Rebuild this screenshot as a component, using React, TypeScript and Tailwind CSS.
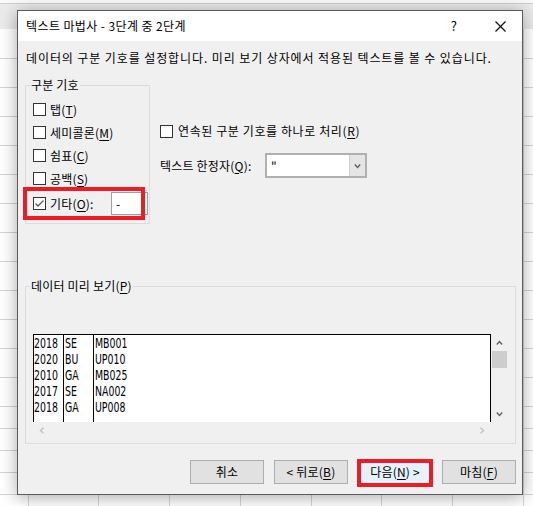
import React from "react";

const rowHeights = [
  "h-[30px]", "h-[29px]", "h-[29px]", "h-[29px]", "h-[29px]", "h-[29px]", "h-[29px]",
  "h-[29px]", "h-[29px]", "h-[29px]", "h-[29px]", "h-[29px]", "h-[29px]",
  "h-[22px]", "h-[22px]", "h-[22px]", "h-[22px]", "h-[22px]",
];
const colWidths = [
  "w-[29px]", "w-[70px]", "w-[71px]", "w-[71px]", "w-[71px]", "w-[70px]", "w-[71px]", "w-[71px]", "w-[71px]",
];

const preview = [
  ["2018", "SE", "MB001"],
  ["2020", "BU", "UP010"],
  ["2010", "GA", "MB025"],
  ["2017", "SE", "NA002"],
  ["2018", "GA", "UP008"],
];

function Mn({ children }: { children: React.ReactNode }) {
  return <u className="underline underline-offset-[2px] decoration-[1px]">{children}</u>;
}

function Box({ checked }: { checked?: boolean }) {
  return (
    <span className="w-[13px] h-[13px] border border-[#333333] bg-white flex items-center justify-center shrink-0">
      {checked && (
        <svg width="11" height="11" viewBox="0 0 11 11">
          <path d="M1.5 5.5 L4 8 L9.5 2.5" stroke="#5a5a5a" strokeWidth="1.3" fill="none" />
        </svg>
      )}
    </span>
  );
}

function Chevron({ dir, color }: { dir: "up" | "down" | "left" | "right"; color: string }) {
  const d = {
    up: "M0.8 4.5 L3.5 1.5 L6.2 4.5",
    down: "M0.8 1.5 L3.5 4.5 L6.2 1.5",
    left: "M4.5 0.8 L1.5 3.5 L4.5 6.2",
    right: "M1.5 0.8 L4.5 3.5 L1.5 6.2",
  }[dir];
  const w = dir === "up" || dir === "down" ? 7 : 6;
  const h = dir === "up" || dir === "down" ? 6 : 7;
  return (
    <svg width={w} height={h} viewBox={`0 0 ${w} ${h}`}>
      <path d={d} stroke={color} strokeWidth="1.4" fill="none" />
    </svg>
  );
}

function Check({ label, checked }: { label: React.ReactNode; checked?: boolean }) {
  return (
    <div className="flex items-center h-[23px] gap-[4px]">
      <Box checked={checked} />
      <span className="leading-4">{label}</span>
    </div>
  );
}

export default function App() {
  return (
    <div className="relative w-[533px] h-[506px] overflow-hidden bg-white font-['Noto_Sans_CJK_KR','Noto_Sans',sans-serif] text-[12px] text-black">
      {/* spreadsheet behind the dialog */}
      <div className="h-[3px] bg-[#fafafa] border-b border-[#cfcfcf] box-content" />
      <div className="h-[25px] bg-[#ebebeb]" />
      {rowHeights.map((h, i) => (
        <div key={i} className={`${h} flex border-b border-[#d4d4d4]`}>
          {colWidths.map((w, j) => (
            <div key={j} className={`${w} shrink-0 border-r border-[#d4d4d4]`} />
          ))}
        </div>
      ))}

      {/* dialog window */}
      <div className="absolute left-[17px] top-[10px] w-[506px] h-[485px] border border-[#5b5b5b] bg-[#f0f0f0] shadow-[0_2px_16px_rgba(0,0,0,0.35)] flex flex-col tracking-[0.2px]">
        <div className="h-[30px] bg-white flex items-center shrink-0">
          <span className="ml-[8px] flex-1 tracking-[0.4px]">텍스트 마법사 - 3단계 중 2단계</span>
          <span className="w-[48px] shrink-0 text-center text-[13px]">?</span>
          <span className="w-[44px] h-[30px] shrink-0 flex items-center justify-center">
            <svg className="w-[11px] h-[11px]" width="11" height="11" viewBox="0 0 11 11">
              <line x1="0.5" y1="0.5" x2="10.5" y2="10.5" stroke="#111111" strokeWidth="1.2" />
              <line x1="10.5" y1="0.5" x2="0.5" y2="10.5" stroke="#111111" strokeWidth="1.2" />
            </svg>
          </span>
        </div>

        <div className="flex-1 pl-[7px] pr-[6px] pt-[9px]">
          <p className="h-4 leading-4 ml-[1px] tracking-[0.9px] whitespace-nowrap">
            데이터의 구분 기호를 설정합니다. 미리 보기 상자에서 적용된 텍스트를 볼 수 있습니다.
          </p>

          <div className="flex mt-[19px]">
            <div className="relative w-[125px] h-[139px] border border-[#dcdcdc] pl-[7px] pt-[12px] shrink-0">
              <span className="absolute -top-[9px] left-[4px] px-[1px] bg-[#f0f0f0] leading-4">구분 기호</span>
              <Check label={<>탭(<Mn>T</Mn>)</>} />
              <Check label={<>세미콜론(<Mn>M</Mn>)</>} />
              <Check label={<>쉼표(<Mn>C</Mn>)</>} />
              <Check label={<>공백(<Mn>S</Mn>)</>} />
              <div className="flex items-center h-[23px] mt-[2px] gap-[4px]">
                <Box checked />
                <span className="w-[57px] leading-4">
                  기타(<Mn>O</Mn>):
                </span>
                <span className="w-[37px] h-[23px] bg-white border border-[#a0a0a0] pl-[4px] flex items-center leading-4">
                  -
                </span>
              </div>
              <div className="absolute -left-[3px] top-[101px] w-[122px] h-[33px] border-4 border-[#ed1c24]" />
            </div>

            <div className="ml-[10px] pt-[38px]">
              <div className="flex items-center h-[16px] gap-[5px]">
                <Box />
                <span className="leading-4 tracking-[0.6px]">
                  연속된 구분 기호를 하나로 처리(<Mn>R</Mn>)
                </span>
              </div>
              <div className="flex items-center mt-[14px]">
                <span className="w-[105px] leading-4">
                  텍스트 한정자(<Mn>Q</Mn>):
                </span>
                <div className="w-[102px] h-[25px] border-2 border-[#b0b0b0] bg-white flex">
                  <span className="flex-1 pl-[4px] leading-[21px]">"</span>
                  <span className="w-[16px] bg-[#e5e5e5] border-l border-[#d0d0d0] flex items-center justify-center">
                    <Chevron dir="down" color="#606060" />
                  </span>
                </div>
              </div>
            </div>
          </div>

          <div className="relative mt-[62px] w-[491px] h-[158px] border border-[#dcdcdc] pl-[7px] pt-[47px]">
            <span className="absolute -top-[9px] left-[4px] px-[1px] bg-[#f0f0f0] leading-4">
              데이터 미리 보기(<Mn>P</Mn>)
            </span>
            <div className="flex w-[475px]">
              <div className="w-[458px] flex flex-col">
                <div className="h-[88px] flex border-l border-t border-r border-black bg-white font-['DejaVu_Sans',sans-serif] text-[14px] leading-4 tracking-normal">
                  {[0, 1, 2].map((c) => (
                    <div
                      key={c}
                      className={
                        c === 0
                          ? "w-[30px] border-r border-black"
                          : c === 1
                          ? "w-[30px] border-r border-black pl-[1px]"
                          : "flex-1 pl-[1px]"
                      }
                    >
                      {preview.map((r, i) => (
                        <div key={i} className="h-4 whitespace-nowrap">
                          <span className="inline-block origin-left scale-x-[0.67]">{r[c]}</span>
                        </div>
                      ))}
                    </div>
                  ))}
                </div>
                <div className="h-[16px] flex items-center justify-between px-[6px]">
                  <Chevron dir="left" color="#c2c2c2" />
                  <Chevron dir="right" color="#c2c2c2" />
                </div>
              </div>
              <div className="w-[17px] h-[88px] flex flex-col">
                <div className="h-[17px] flex items-center justify-center">
                  <Chevron dir="up" color="#606060" />
                </div>
                <div className="h-[17px] mx-[1px] bg-[#cdcdcd]" />
                <div className="flex-1" />
                <div className="h-[17px] flex items-center justify-center">
                  <Chevron dir="down" color="#606060" />
                </div>
              </div>
            </div>
          </div>

          <div className="mt-[16px] flex justify-end gap-[10px]">
            <button className="w-[74px] h-[24px] border border-[#adadad] bg-[#e1e1e1] flex items-center justify-center">
              취소
            </button>
            <button className="w-[74px] h-[24px] border border-[#adadad] bg-[#e1e1e1] flex items-center justify-center">
              &lt; 뒤로(<Mn>B</Mn>)
            </button>
            <div className="relative">
              <button className="w-[74px] h-[24px] border border-[#0078d7] bg-[#e5f1fb] flex items-center justify-center">
                다음(<Mn>N</Mn>) &gt;
              </button>
              <div className="absolute -left-[1px] -right-[1px] -top-[1px] -bottom-[3px] border-4 border-[#ed1c24]" />
            </div>
            <button className="w-[74px] h-[24px] border border-[#adadad] bg-[#e1e1e1] flex items-center justify-center">
              마침(<Mn>F</Mn>)
            </button>
          </div>
        </div>
      </div>
    </div>
  );
}
